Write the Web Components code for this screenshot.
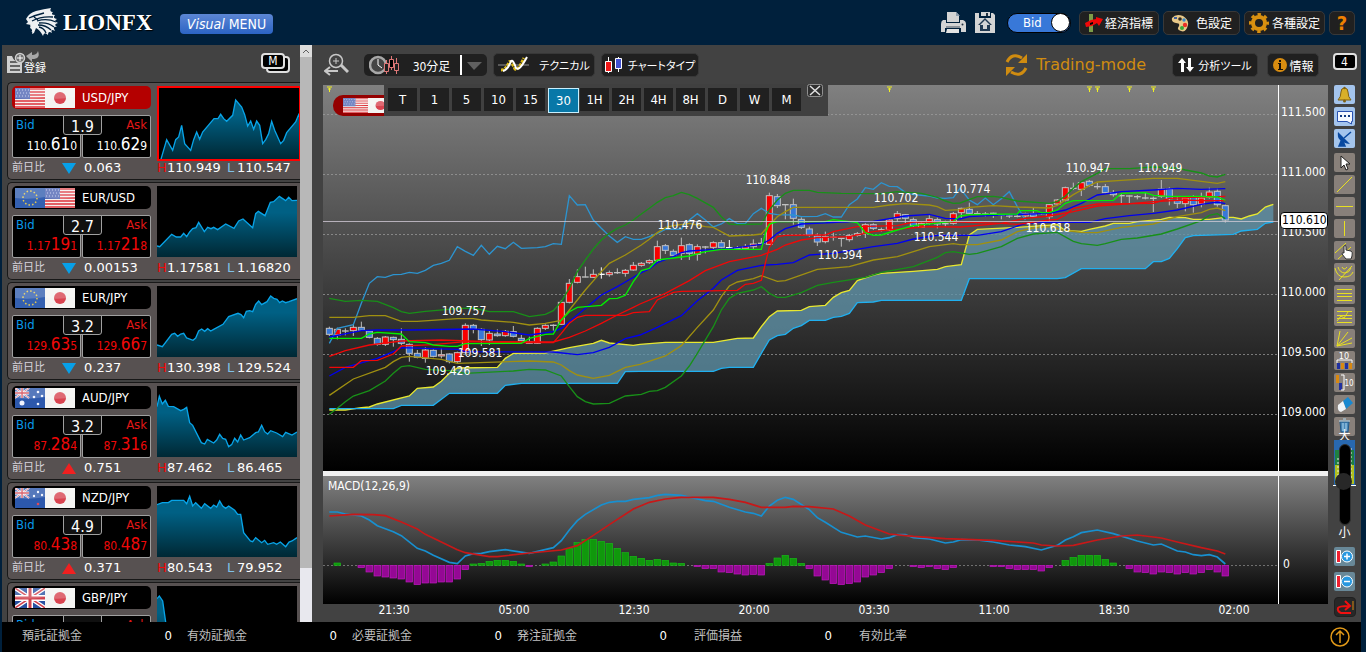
<!DOCTYPE html>
<html lang="ja">
<head>
<meta charset="utf-8">
<title>LION FX</title>
<style>
  body {
    margin: 0;
    background: #00203c;
    color: #fff;
    font-family: 'DejaVu Sans Condensed', 'Noto Sans CJK JP', sans-serif;
    font-size: 12px;
  }
</style>
</head>
<body>
<fx-app>
  <app-header slot="header"></app-header>
  <quote-board slot="board">
    <quote-card pair="USD/JPY" flags="us jp" bid="110. 61 0" ask="110. 62 9" spread="1.9" diff="0.063" trend="down" high="110.949" low="110.547" tick="flat" selected
      spark="5,217 23,155 41,187 50,155 59,147 68,112 77,167 95,187 104,155 113,132 122,154 131,132 165,92 177,92 185,79 194,92 203,100 221,82 230,36 248,57 257,80 266,114 275,99 284,124 293,99 302,112 311,167 320,155 329,137 338,100 347,127 365,167 374,157 383,134 410,102 419,80 426,97"></quote-card>
    <quote-card pair="EUR/USD" flags="eu us" bid="1.17 19 1" ask="1.17 21 8" spread="2.7" diff="0.00153" trend="down" high="1.17581" low="1.16820"
      spark="0,180 8,182 44,145 58,153 71,153 80,142 89,152 98,138 107,128 117,125 125,109 142,137 152,124 162,128 170,124 182,131 206,114 231,127 245,105 258,99 287,125 296,83 304,76 324,89 340,49 350,47 367,31 386,44 395,34 405,44 420,43"></quote-card>
    <quote-card pair="EUR/JPY" flags="eu jp" bid="129. 63 5" ask="129. 66 7" spread="3.2" diff="0.237" trend="down" high="130.398" low="129.524"
      spark="0,177 16,182 44,145 53,142 62,151 71,144 80,142 89,156 108,163 116,156 125,135 134,129 143,136 152,128 161,135 170,130 198,115 215,92 243,82 252,86 260,95 268,76 278,74 287,77 296,55 305,45 314,56 330,47 341,30 350,37 360,40 368,50 376,45 386,50 396,47 420,38"></quote-card>
    <quote-card pair="AUD/JPY" flags="au jp" bid="87. 28 4" ask="87. 31 6" spread="3.2" diff="0.751" trend="up" high="87.462" low="86.465"
      spark="0,62 7,31 16,54 25,43 34,61 50,62 71,74 80,70 89,64 98,110 107,118 133,170 143,174 151,160 170,171 179,162 188,145 197,157 206,160 215,182 224,176 233,157 242,168 251,147 260,162 278,155 296,140 304,138 314,118 323,137 332,144 341,134 359,141 377,152 386,139 405,147 420,138"></quote-card>
    <quote-card pair="NZD/JPY" flags="nz jp" bid="80. 43 8" ask="80. 48 7" spread="4.9" diff="0.371" trend="up" high="80.543" low="79.952"
      spark="0,56 16,50 34,50 44,43 80,43 89,53 98,31 107,60 116,50 133,67 143,53 161,67 170,57 179,63 188,45 197,60 206,67 215,60 233,73 242,85 251,85 260,140 280,165 287,167 296,155 314,170 323,163 332,175 350,170 359,175 370,168 386,182 396,168 405,165 420,155"></quote-card>
    <quote-card pair="GBP/JPY" flags="gb jp" bid="" ask="" spread="" diff="" trend="" high="" low=""
      spark="0,38 7,30 17,45 26,108 30,150 60,170 420,180"></quote-card>
  </quote-board>
  <chart-toolbar slot="toolbar"></chart-toolbar>
  <price-chart slot="chart"><period-tabs></period-tabs></price-chart>
  <macd-chart slot="chart"></macd-chart>
  <draw-tools slot="tools"></draw-tools>
  <account-bar slot="footer"></account-bar>
</fx-app>

<script>
// Styles that every shadow root shares
const base = `
  * { box-sizing: border-box; }
  button {
    margin: 0;
    padding: 0;
    border: none;
    background: none;
    color: inherit;
    font: inherit;
    white-space: nowrap;
    cursor: pointer;
  }
  svg { display: block; flex: none; }
`;

class FxElement extends HTMLElement {
  connectedCallback() {
    if (this.shadowRoot) return;
    this.attachShadow({ mode: 'open' });
    const template = document.createElement('template');
    template.innerHTML = `<style>${base}${this.styles()}</style>${this.render()}`;
    this.shadowRoot.appendChild(template.content.cloneNode(true));
  }
  styles() { return ''; }
  render() { return '<slot></slot>'; }
}

// Flags, 30x20
const unionJack = `
  <path d="M0 0L30 20M30 0L0 20" stroke="#fff" stroke-width="4"/>
  <path d="M0 0L30 20M30 0L0 20" stroke="#d0404c" stroke-width="1.5"/>
  <path d="M15 0V20M0 10H30" stroke="#fff" stroke-width="6"/>
  <path d="M15 0V20M0 10H30" stroke="#d0404c" stroke-width="3"/>`;
const star = (x, y, r) => `<circle cx="${x}" cy="${y}" r="${r}" fill="#f0f4ff"/>`;
const flagArt = {
  us: () => `<path d="M0 0H30V20H0Z" fill="#f6f1ee"/>
    <path d="M0 1H30M0 4H30M0 7H30M0 10H30M0 13H30M0 16H30M0 19H30" stroke="#dd3038" stroke-width="1.5"/>
    <path d="M0 0H15V11H0Z" fill="#5268b4"/>
    <path d="M1 2H15M2 5H15M1 8H15" stroke="#bcc8ee" stroke-dasharray="1 2"/>`,
  jp: () => `<path d="M0 0H30V20H0Z" fill="#f4f4f2"/><circle cx="15" cy="10" r="6" fill="#d84450"/>`,
  eu: () => `<path d="M0 0H30V20H0Z" fill="#3460b0"/>
    <circle cx="15" cy="10" r="7" fill="none" stroke="#e8cc50" stroke-width="1.5" stroke-dasharray="1.5 2.16"/>`,
  gb: () => `<path d="M0 0H30V20H0Z" fill="#2850a0"/>${unionJack}`,
  au: () => `<path d="M0 0H30V20H0Z" fill="#2c58ac"/><g transform="scale(.47 .5)">${unionJack}</g>
    ${star(7, 15, 2.5)}${star(23, 4, 1.3)}${star(19, 9, 1.3)}${star(27, 8, 1.3)}${star(23, 16, 1.3)}`,
  nz: () => `<path d="M0 0H30V20H0Z" fill="#2c58ac"/><g transform="scale(.47 .5)">${unionJack}</g>
    ${star(23, 4, 1.2)}${star(19, 8, 1.2)}${star(27, 7, 1.2)}
    <circle cx="23" cy="16" r="1.3" fill="#e04858"/>`,
};
const flag = (code, w = 30, h = 20) => `
  <svg width="${w}" height="${h}" viewBox="0 0 30 20" preserveAspectRatio="none" aria-hidden="true">
    ${flagArt[code]()}
    <path d="M0 0H30V9Q15 12 0 10Z" fill="#fff" opacity=".2"/>
  </svg>`;

class FxApp extends FxElement {
  styles() {
    return `
      :host {
        display: grid;
        grid-template: 45px minmax(0, 1fr) 30px / 311px minmax(0, 1fr);
        height: 100vh;
        padding: 0 5px 0 2px;
        box-sizing: border-box;
      }
      .top, .foot { grid-column: 1 / -1; }
      .side { display: flex; min-height: 0; background: #424242; }
      .main {
        display: grid;
        grid-template: 40px minmax(0, 1fr) / minmax(0, 1fr) 33px;
        background: #424242;
      }
      .tools { grid-row: 1 / 3; grid-column: 2; }
      .charts {
        display: flex;
        flex-direction: column;
        min-height: 0;
        margin-left: 10px;
      }
    `;
  }
  render() {
    return `
      <div class="top"><slot name="header"></slot></div>
      <div class="side"><slot name="board"></slot></div>
      <main class="main">
        <slot name="toolbar"></slot>
        <div class="charts"><slot name="chart"></slot></div>
        <div class="tools"><slot name="tools"></slot></div>
      </main>
      <div class="foot"><slot name="footer"></slot></div>
    `;
  }
}

class DarkButton extends FxElement {
  styles() {
    return `
      :host { display: block; }
      button {
        display: flex;
        align-items: center;
        justify-content: center;
        gap: var(--gap, 4px);
        width: 100%;
        height: 24px;
        padding: 0 5px;
        border: 1px solid #383838;
        border-radius: 5px;
        background: #202020;
      }
    `;
  }
  render() {
    return '<button type="button"><slot name="icon"></slot><slot></slot></button>';
  }
}

class AppHeader extends FxElement {
  styles() {
    return `
      :host { display: flex; align-items: center; height: 45px; padding: 0 6px 0 22px; }
      .logo { display: flex; align-items: center; gap: 4px; width: 156px; }
      .name { font: bold 23px/28px 'Liberation Serif', serif; text-shadow: 1px 1px 1px #000; }
      .visual {
        width: 93px;
        height: 20px;
        margin-top: 3px;
        border-radius: 4px;
        background: linear-gradient(#5c86d4, #2c64c4);
        font-size: 14px;
        line-height: 20px;
      }
      .icons { display: flex; gap: 9px; margin-left: auto; }
      .toggle {
        position: relative;
        display: flex;
        align-items: center;
        width: 64px;
        height: 20px;
        margin: 0 8px 0 12px;
        padding-left: 15px;
        border: 1px solid #000;
        border-radius: 10px;
        background: #3878d8;
        font-size: 13px;
      }
      .toggle input {
        position: absolute;
        right: 0;
        width: 19px;
        height: 19px;
        margin: 0;
        border: 1px solid #000;
        border-radius: 50%;
        background: #fff;
        appearance: none;
      }
      .buttons { display: grid; grid-template-columns: 80px 77px 81px 26px; gap: 4px; }
      .help { color: #f08000; font-size: 20px; font-weight: bold; }
    `;
  }
  render() {
    return `
      <div class="logo">
        <svg width="35" height="30" viewBox="0 0 35 30" fill="#eef0f2" aria-hidden="true">
          <path d="M2 11Q5 5 12 3Q20 1 27 0Q25 4 29 4Q26 7 31 7Q28 10 33 11Q29 13 34 15Q29 16 33 19Q28 18 31 23Q26 20 28 25Q24 22 24 27Q20 23 19 28Q16 22 12 20L10 25L8 26Q9 21 6 20L7 17L2 16L4 14Z"/>
          <path d="M5 10Q12 7 20 5M8 13Q17 8 29 9M13 13Q23 10 32 14M15 15Q24 14 30 19M14 17Q22 17 27 22M15 19Q20 20 22 25M10 9L14 12" fill="none" stroke="#00203c" stroke-width="1.3"/>
          <path d="M6 18L11 16L10 20L8 24" fill="none" stroke="#eef0f2"/>
        </svg>
        <span class="name">LIONFX</span>
      </div>
      <button class="visual" type="button"><i>Visual</i> MENU</button>
      <div class="icons">
        <svg width="25" height="22" viewBox="0 0 25 22" fill="#d4d4d4" aria-hidden="true">
          <path d="M6 0H15L18 3V10H6Z"/><path d="M15 0V4H19" fill="#8c9cac"/>
          <path d="M2 8H5V11H19V8H22Q25 9 25 12V20H20V16H4V20H0V12Q0 9 2 8Z"/>
          <path d="M6 17H18V21H5Z" fill="#e4e4e4"/><path d="M5 15H19" stroke="#405060"/><circle cx="21.5" cy="12.5" r="1" fill="#203040"/>
        </svg>
        <svg width="20" height="22" viewBox="0 0 20 22" aria-hidden="true">
          <path d="M0 1H4V6H16V1H18L20 3V21H0Z" fill="#d4d4d4"/><path d="M6 0H15V4H6Z" fill="#d4d4d4"/><path d="M11 1H13V4H11Z" fill="#203040"/>
          <path d="M10 6L17 13H15V19H5V13H3Z" fill="#203850"/><path d="M10 8L15 13H12V17H8V13H5Z" fill="#d4d4d4"/>
        </svg>
      </div>
      <label class="toggle">Bid<input type="checkbox" checked></label>
      <div class="buttons">
        <dark-button style="--gap: 2px">
          <svg slot="icon" width="18" height="18" viewBox="0 0 18 18"><path d="M4 0H8V18H4Z" fill="#7c9c48"/><path d="M0 9L6 6L11 5V3L18 5L14 12L12 9L7 12L1 13Z" fill="#f00808"/><path d="M5 9L8 8V10L5 11Z" fill="#000"/></svg>
          経済指標
        </dark-button>
        <dark-button style="--gap: 7px">
          <svg slot="icon" width="18" height="18" viewBox="0 0 18 18"><path d="M1 4Q5 -1 12 2Q18 6 17 11Q15 19 10 17Q5 16 8 12Q9 9 5 9Q0 8 1 4Z" fill="#e8c888"/><path d="M3 3H6V5H3Z" fill="#4060a0"/><circle cx="9" cy="5" r="1.8" fill="#302820"/><circle cx="13" cy="6" r="1.7" fill="#3888c8"/><circle cx="14" cy="11" r="2.2" fill="#e83028"/><circle cx="11" cy="14" r="2" fill="#38a838"/></svg>
          色設定
        </dark-button>
        <dark-button style="--gap: 3px">
          <svg slot="icon" width="20" height="20" viewBox="0 0 20 20"><circle cx="10" cy="10" r="6" fill="none" stroke="#d89010" stroke-width="4"/><circle cx="10" cy="10" r="8.5" fill="none" stroke="#d89010" stroke-width="3" stroke-dasharray="3.4 3.27" stroke-dashoffset="1.7"/></svg>
          各種設定
        </dark-button>
        <dark-button class="help">?</dark-button>
      </div>
    `;
  }
}

class QuoteBoard extends FxElement {
  styles() {
    return `
      :host { display: flex; flex: 1; min-height: 0; }
      .list { flex: 1; min-width: 0; overflow: hidden; padding-left: 5px; }
      .head { display: flex; align-items: flex-start; justify-content: space-between; height: 37px; padding: 6px 9px 0 0; }
      .add { display: flex; align-items: flex-end; height: 24px; font-size: 11px; line-height: 12px; }
      .add svg { align-self: flex-start; }
      .bar { display: flex; flex-direction: column; width: 12px; margin-right: 1px; background: #e8e8ee; }
      .bar .up { height: 12px; background: #dcdcdc; }
      .bar .thumb { height: 511px; background: #b8b8b8; }
    `;
  }
  render() {
    return `
      <div class="list">
        <div class="head">
          <button class="add" type="button">
            <svg width="17" height="24" viewBox="0 0 17 24" overflow="visible" aria-hidden="true">
              <path d="M0 5H5Q8 13 15 10V22H0Z" fill="#d0d0d0"/>
              <path d="M3 11H13M3 15H13M3 19H13" stroke="#404040" stroke-width="1.5"/>
              <circle cx="13" cy="7" r="4.5" fill="#707070" stroke="#d0d0d0" stroke-width="1.5"/>
              <path d="M13 4V10M10 7H16" stroke="#fff"/>
              <path d="M19 5L25 1V4Q30 4 31 0Q34 8 25 8V11Z" fill="#a8a8a8"/>
            </svg>
            登録
          </button>
          <button type="button" aria-label="M">
            <svg width="30" height="24" viewBox="0 0 30 24" fill="#000" stroke="#e0e0e0" stroke-width="2">
              <rect x="6" y="6" width="22" height="15" rx="3"/><rect x="1" y="3" width="22" height="14" rx="3"/>
              <text x="12" y="14" font-size="12" fill="#fff" stroke="none" text-anchor="middle">M</text>
            </svg>
          </button>
        </div>
        <slot></slot>
      </div>
      <div class="bar" aria-hidden="true">
        <svg class="up" width="12" height="12"><path d="M3 8L6 5L9 8" fill="none" stroke="#606060"/></svg>
        <div class="thumb"></div>
      </div>
    `;
  }
}

class QuoteCard extends FxElement {
  styles() {
    return `
      :host {
        display: grid;
        grid-template: 74px 16px / 139px 143px;
        column-gap: 6px;
        height: 98px;
        margin-bottom: 2px;
        padding: 3px 0 0 4px;
        box-sizing: border-box;
        border: 1px solid #181818;
        border-right: none;
        border-radius: 5px 0 0 5px;
        background: #575151;
      }
      .pair {
        display: flex;
        align-items: center;
        width: 139px;
        height: 23px;
        padding-left: 3px;
        border-radius: 5px;
        background: #000;
        font-size: 13px;
      }
      .pair span { margin-left: 7px; }
      :host([selected]) .pair { background: #b40000; }
      .prices {
        display: grid;
        grid-template-columns: 1fr 1fr;
        gap: 1px;
        position: relative;
        height: 42px;
        margin-top: 6px;
      }
      .price {
        display: flex;
        flex-direction: column;
        justify-content: space-between;
        padding: 0 3px 1px 3px;
        border: 1px solid #a0a0a0;
        border-radius: 2px;
        background: #000;
        color: #f01010;
        text-align: right;
        line-height: 18px;
      }
      .bid { text-align: left; color: #0898e8; font-size: 13px; }
      .ask { color: #e01818; font-size: 13px; }
      .fig { align-self: flex-end; color: #f00808; line-height: 20px; }
      .fig b { font-size: 17px; font-weight: normal; }
      :host([tick='flat']) .fig { color: #fff; }
      .spread {
        position: absolute;
        top: 0;
        left: 51px;
        width: 39px;
        height: 20px;
        border: 1px solid #a0a0a0;
        border-radius: 0 0 3px 3px;
        background: #101010;
        font-size: 16px;
        line-height: 22px;
        text-align: center;
      }
      .spark { display: block; width: 140px; height: 71px; background: #000; }
      :host([selected]) .spark { width: 143px; height: 75px; border: 2px solid #f00; border-right-width: 1px; }
      .row {
        display: flex;
        align-items: center;
        font-family: 'DejaVu Sans', 'Noto Sans CJK JP', sans-serif;
        font-size: 13px;
        line-height: 16px;
      }
      .row small { width: 50px; font-size: 11px; color: #d8d4dc; }
      .row svg { margin-right: 8px; }
      .h, .l { display: inline-flex; width: 70px; }
      .h::before { content: 'H'; width: 10px; color: #f00808; }
      .l::before { content: 'L'; width: 10px; color: #80c0e8; }
    `;
  }
  render() {
    const get = name => this.getAttribute(name);
    const figure = value => {
      const [head = '', big = '', last = ''] = value.split(' ');
      return `${head}<b>${big}</b>${last}`;
    };
    const [left, right] = get('flags').split(' ');
    const line = get('spark');
    const first = line.split(',')[0];
    const last = line.split(' ').pop().split(',')[0];
    const up = get('trend') === 'up';
    // a pair without quotes yet has no day figures
    const figures = get('diff') ? `
      <div class="row">
        <small>前日比</small>
        <svg width="14" height="11"><path d="${up ? 'M0 11H14L7 0Z' : 'M0 0H14L7 11Z'}" fill="${up ? '#f02020' : '#08a0e8'}"/></svg>
        ${get('diff')}
      </div>
      <div class="row"><span class="h">${get('high')}</span><span class="l">${get('low')}</span></div>` : '';
    return `
      <div>
        <button class="pair" type="button">${flag(left)}${flag(right)}<span>${get('pair')}</span></button>
        <div class="prices">
          <button class="price" type="button"><span class="bid">Bid</span><span class="fig">${figure(get('bid'))}</span></button>
          <button class="price" type="button"><span class="ask">Ask</span><span class="fig">${figure(get('ask'))}</span></button>
          <span class="spread">${get('spread')}</span>
        </div>
      </div>
      <svg class="spark" viewBox="0 0 420 213" preserveAspectRatio="none" aria-hidden="true">
        <defs><linearGradient id="fill" x1="0" y1="80" x2="0" y2="213" gradientUnits="userSpaceOnUse">
          <stop offset="0" stop-color="#006084"/><stop offset="1" stop-color="#002834"/></linearGradient></defs>
        <path d="M${first} 213L${line}L${last} 213Z" fill="url(#fill)"/>
        <polyline points="${line}" fill="none" stroke="#08a4e8" stroke-width="4"/>
      </svg>
      ${figures}
    `;
  }
}

class ChartToolbar extends FxElement {
  styles() {
    return `
      :host { display: flex; align-items: center; padding-left: 11px; font-feature-settings: 'palt'; }
      .zoom { margin-right: 15px; }
      .foot { display: flex; align-items: center; width: 123px; height: 22px; border-radius: 5px; background: #202020; }
      .foot span { width: 39px; margin: 0 9px 0 12px; }
      .foot svg:first-child { margin-left: 5px; }
      .tech { width: 102px; margin: 0 6px; }
      .type { width: 98px; }
      dark-button { font-size: 11px; }
      .mode { display: flex; align-items: center; gap: 8px; margin-left: auto; color: #d08c10; font: 16px/24px 'DejaVu Sans', sans-serif; }
      .tool { width: 86px; margin-left: 26px; }
      .info { width: 52px; margin: 0 9px; }
    `;
  }
  render() {
    return `
      <button class="zoom" type="button" aria-label="縮小">
        <svg width="25" height="24" viewBox="0 0 25 24" fill="none" stroke="#c8c8c8" stroke-width="2">
          <circle cx="12" cy="8" r="6.5" stroke-width="1.5"/><path d="M12 5V11M9 8H15" stroke-width="1"/>
          <path d="M17 12L24 19" stroke-width="3"/><path d="M14 18H2M6 14L1 18L6 22"/>
        </svg>
      </button>
      <button class="foot" type="button">
        <svg width="31" height="20" viewBox="0 0 31 20">
          <circle cx="9" cy="10" r="8" fill="#444" stroke="#a8a8a8" stroke-width="2.5"/>
          <path d="M9 4V10L13 13" fill="none" stroke="#fff"/>
          <g fill="#202020" stroke="#e07878"><path d="M17.500 5V19M22.500 1V15M27.500 3V19"/><path d="M15.500 8.500H19.500V16.500H15.500Z"/><path d="M20.500 4.500H24.500V12.500H20.500Z" fill="#000"/><path d="M25.500 8.500H29.500V15.500H25.500Z"/></g>
        </svg>
        <span>30分足</span>
        <svg width="27" height="20"><path d="M0 0H2V20H0Z" fill="#fff"/><path d="M7 7H22L14 15Z" fill="#606060"/></svg>
      </button>
      <dark-button class="tech" style="--gap: 10px">
        <svg slot="icon" width="31" height="18" viewBox="0 0 31 18" fill="none">
          <path d="M0 9H31" stroke="#909090"/><path d="M3 14Q8 14 11 6Q13 4 17 13Q20 15 26 2" stroke="#d8b818" stroke-width="3" stroke-dasharray="3 1"/>
          <path d="M5 15Q10 14 13 5Q15 3 18 12Q21 16 29 1" stroke="#fff" stroke-width="2"/>
        </svg>
        テクニカル
      </dark-button>
      <dark-button class="type" style="--gap: 6px">
        <svg slot="icon" width="17" height="16" viewBox="0 0 17 16" stroke="#fff">
          <path d="M3.500 0V16M13.500 0V15"/><path d="M.500 4.500H6.500V14.500H.500Z" fill="#f01818"/><path d="M10.500 1.500H16.500V11.500H10.500Z" fill="#4050d0"/>
        </svg>
        チャートタイプ
      </dark-button>
      <div class="mode">
        <svg width="23" height="24" viewBox="0 0 23 24" fill="none" stroke="#d08c10" stroke-width="3">
          <path d="M2 9Q7 -1 17 5M21 15Q16 25 6 19"/><path d="M22 1V10H13ZM1 23V14H10Z" fill="#d08c10" stroke="none"/>
        </svg>
        Trading-mode
      </div>
      <dark-button class="tool">
        <svg slot="icon" width="16" height="14" viewBox="0 0 16 14" fill="#fff"><path d="M4 0L8 5H6V14H3V5H0Z"/><path d="M12 14L8 9H10V0H13V9H16Z"/></svg>
        分析ツール
      </dark-button>
      <dark-button class="info" style="--gap: 3px; font-size: 12px">
        <svg slot="icon" width="14" height="14" viewBox="0 0 14 14"><circle cx="7" cy="7" r="7" fill="#d88c10"/><path d="M5 5H8V11H10V12H5V11H6V6H5ZM6 2H8V4H6Z" fill="#181008"/></svg>
        情報
      </dark-button>
    `;
  }
}

class PeriodTabs extends FxElement {
  styles() {
    return `
      :host {
        position: absolute;
        top: -1px;
        left: 61px;
        display: flex;
        gap: 3px;
        width: 444px;
        height: 32px;
        padding: 4px 4px 0;
        box-sizing: border-box;
        background: #404040;
        font-size: 13px;
      }
      button { width: 29px; height: 23px; background: #202020; }
      button[aria-pressed='true'] { width: 31px; height: 25px; margin-right: -2px; border: 1px solid #c8f0ff; background: #0878a8; }
      .close { width: 16px; height: 14px; margin: -4px 0 0 3px; background: none; }
    `;
  }
  render() {
    const periods = ['T', '1', '5', '10', '15', '30', '1H', '2H', '4H', '8H', 'D', 'W', 'M'];
    return `
      ${periods.map(p => `<button type="button" aria-pressed="${p === '30'}">${p}</button>`).join('')}
      <button class="close" type="button" aria-label="閉じる">
        <svg width="16" height="14"><rect x=".5" y=".5" width="15" height="12" rx="2" fill="#303030" stroke="#909090"/><path d="M3 2L13 11M13 2L3 11" stroke="#e0e0e0" stroke-width="1.500"/></svg>
      </button>
    `;
  }
}

// Chart data is kept in thirds of a pixel, in sections that follow one another
const join = (series, width) => series.split('|').map((part, n) =>
  part.trim().split(/\s+/).map(p => {
    const [x, y] = p.split(',').map(Number);
    return `${x + n * width},${y}`;
  }).join(' ')).join(' ');
const STEP = 24;
const START = 28;

const lines = [
  // lagging span
  ['#2c94d0', `28,790 52,745 100,734 124,670 148,610 172,590 196,592 220,584 244,583 268,577 292,580 316,571 340,556 364,550 388,541 412,500 436,514 460,526 484,496 508,523 532,499 556,506 580,487 604,505 652,503 676,500 700,491 724,493 748,347 772,375 796,374 820,420 844,445 868,468 892,487 916,470 940,478 964,478 |
    28,470 52,460 76,448 124,447 148,420 172,401 196,420 220,441 244,432 268,416 292,431 316,431 340,401 364,385 388,400 412,404 460,405 484,410 532,409 556,401 580,411 604,411 628,374 652,357 676,323 700,328 724,308 748,319 772,320 796,337 820,344 868,348 892,354 916,355 940,353 960,325 |
    28,360 52,374 76,354 100,374 124,356 148,335 172,380 196,420`],
  // bands
  ['#189018', `28,655 76,664 124,661 172,664 220,683 244,695 268,700 316,694 412,686 460,684 508,695 580,695 628,710 676,703 700,692 724,665 748,625 772,575 796,540 820,507 844,480 868,460 892,445 916,435 940,420 964,402 |
    28,385 52,367 76,353 100,347 124,337 148,344 172,355 220,382 244,410 268,432 292,434 364,432 388,390 412,360 436,340 460,331 508,331 532,337 604,340 724,341 772,335 844,340 892,352 916,363 940,370 |
    0,369 52,350 100,349 124,352 172,363 268,370 292,365 316,348 340,325 364,305 412,280 436,266 508,266 580,261 652,264 676,270 724,279 748,288 772,291 796,283`],
  ['#189018', `28,1003 52,985 76,965 100,948 148,932 196,903 220,880 244,860 268,857 316,868 388,872 436,880 580,873 628,868 676,870 724,888 748,920 772,950 796,965 820,972 868,970 916,948 964,943 |
    28,934 52,932 76,922 124,888 148,858 172,820 220,740 244,690 268,655 292,640 340,630 364,620 388,640 412,652 436,652 484,638 532,616 580,607 676,592 724,577 820,560 892,532 916,518 940,515 |
    28,523 52,520 124,500 172,475 220,462 292,457 340,484 364,491 412,496 436,491 484,478 532,474 604,462 652,447 724,422 748,406 772,401 796,416`],
  ['#a09010', `28,712 100,712 148,707 196,707 244,724 292,724 412,716 460,716 484,720 580,727 628,735 676,730 724,721 748,690 796,630 844,575 868,550 916,525 964,495 |
    28,478 52,458 76,443 100,437 148,430 196,440 220,442 268,468 340,465 364,462 388,435 412,410 436,395 460,382 700,382 748,375 796,371 868,375 892,380 916,391 |
    0,389 28,382 100,377 172,381 268,384 292,376 340,344 388,317 412,306 484,301 580,295 652,295 700,301 772,310 796,305`],
  ['#a09010', `28,946 100,897 196,862 220,845 244,832 268,829 364,838 412,850 628,843 700,846 724,855 748,872 772,885 820,895 868,886 916,862 |
    0,853 76,828 124,797 172,742 220,690 244,650 268,618 292,606 340,596 364,587 412,604 436,602 532,568 628,560 700,540 772,530 868,500 940,491 |
    0,494 52,494 124,480 172,455 220,444 268,440 316,452 364,457 412,458 484,442 580,432 652,410 724,398 748,388 772,384 796,392`],
  ['#0000f0', `28,771 124,752 172,750 268,750 460,747 556,755 628,765 700,755 724,745 772,705 844,645 892,620 916,606 964,578 |
    28,567 52,548 100,530 124,518 148,513 268,506 364,493 388,480 412,460 436,446 484,432 604,426 700,424 796,408 868,403 916,415 |
    0,417 28,410 100,406 268,400 316,390 364,370 412,345 484,335 580,330 652,325 724,328 796,326`],
  ['#0000f0', `28,888 76,862 172,835 220,815 244,803 412,808 436,815 700,816 772,824 820,818 868,802 916,776 |
    0,765 52,742 124,707 172,662 220,625 244,600 292,571 364,556 412,553 460,548 508,525 580,520 700,500 772,490 820,477 892,466 |
    0,466 52,466 124,455 196,430 244,427 388,427 436,416 508,407 580,400 652,390 724,373 772,366 796,371`],
  ['#f00808', `28,829 76,812 148,795 244,783 364,780 508,785 700,786 748,772 796,753 844,730 892,705 940,682 |
    0,672 76,640 148,602 196,572 268,545 364,526 412,508 436,495 484,480 532,473 628,470 700,455 772,447 868,440 |
    0,441 124,430 196,415 268,408 340,395 412,378 484,373 580,365 676,360 724,362 796,362`],
  // base line and conversion line
  ['#f00808', `28,862 100,862 124,842 172,841 220,822 244,798 340,794 436,785 604,788 700,788 724,760 748,730 772,712 796,706 916,706 940,698 |
    28,695 52,660 100,637 124,634 292,631 316,613 340,610 364,601 376,550 388,502 412,470 436,466 556,465 580,455 652,440 772,437 820,426 |
    0,426 124,430 172,433 268,420 292,418 316,405 340,385 412,372 580,370 628,355 700,352 796,349`],
  ['#00f000', `28,775 124,775 148,762 172,757 244,762 268,785 316,788 340,795 388,799 412,799 436,791 604,790 628,775 676,763 700,762 724,720 748,695 772,682 844,676 868,656 892,655 916,646 940,605 964,572 |
    28,565 52,540 148,528 196,515 244,508 364,508 376,460 388,432 412,425 556,425 580,419 652,428 676,458 700,466 724,465 772,450 820,437 940,424 |
    0,408 28,404 172,402 180,392 230,392 244,398 268,398 292,390 316,370 340,362 460,361 484,340 556,338 580,346 628,349 724,349 772,351 796,361`],
];
const cloudTop = `28,990 76,990 124,983 148,981 172,972 268,948 292,925 340,921 364,904 388,880 412,864 532,862 556,835 580,820 676,819 748,803 820,790 844,781 868,789 940,796 |
  0,793 76,787 220,787 292,775 340,774 364,740 388,710 412,693 484,691 508,680 556,676 580,652 604,638 628,631 652,602 700,585 724,580 820,574 892,568 916,560 964,554 |
  28,465 52,448 172,442 292,434 316,452 364,454 388,448 436,438 460,430 508,430 532,425 604,418 628,412 676,413 700,418 748,418 796,412 820,412 844,417 868,408 892,402 916,381 940,373`;
const cloudBottom = `28,986 220,986 244,976 340,976 388,940 532,940 556,916 604,910 892,910 916,875 |
  0,874 220,874 244,865 268,862 340,862 364,820 388,780 412,767 436,763 460,745 484,737 508,721 556,721 580,712 604,709 628,700 652,668 700,666 724,661 964,661 |
  28,596 292,596 316,593 364,566 556,566 580,545 604,545 628,535 652,506 676,473 700,467 820,463 844,453 892,448 916,430 940,426`;

// body top, body bottom, high, low; r = rise, b = fall, d = no body
const candles = `b745,763,740,768 r748,765,743,778 d753,753,745,766 r742,752,734,768 b742,751,725,753 b753,772,753,775 b775,793,771,797 r771,793,768,798
  b772,779,770,800 b778,790,745,795 b793,820,790,845 b820,832,810,835 r810,835,802,848 b811,829,808,832 r824,828,805,835 b822,845,820,850
  r818,845,815,850 r736,818,730,820 b736,747,732,760 b748,779,745,798 r760,780,750,795 b762,767,748,770 r754,767,750,770 b755,769,738,772
  b775,782,765,785 r785,790,770,790 r745,790,742,792 r736,745,733,750 d736,736,733,752 r667,733,660,735 r610,667,597,670 r590,607,568,610
  d591,591,560,592 r583,592,568,594 w583,583,562,596 r578,584,572,590 d578,578,565,582 r571,580,567,590 r556,570,546,572 r550,556,546,560
  r542,548,538,552 r500,541,482,545 b497,511,492,522 b514,526,508,530 r497,520,473,540 b494,520,490,540 r500,523,493,542 d501,501,498,520
  r488,502,484,510 b488,502,480,505 w503,503,480,510 d505,505,498,510 r500,506,492,510 r492,500,478,508 d490,490,474,492 r347,493,338,495
  b350,377,342,384 d374,374,372,418 b374,415,356,434 b418,442,412,447 b447,465,440,470 b468,486,460,498 r470,485,455,490 d472,472,458,482
  d475,475,475,500 r467,479,462,485 r461,466,456,470 r434,460,430,474 b434,445,430,450 d449,449,443,455 r420,450,417,453 r401,416,393,425
  b404,415,402,430 b419,437,413,440 r430,442,425,444 r416,430,405,434 b419,432,413,445 d431,431,422,440 r401,430,396,434 r385,398,383,414
  b388,400,368,402 d401,401,393,405 d402,402,396,410 d400,400,398,414 d405,405,402,418 d408,408,402,414 d409,409,405,412 r401,408,398,412
  b401,409,384,412 d401,401,396,404 r374,410,370,424 r360,372,357,376 r323,360,320,364 d325,325,308,330 r308,328,306,348 b304,316,300,320
  d320,320,308,328 b320,338,312,342 b338,344,330,350 d347,347,343,370 d348,348,346,370 d350,350,345,358 d354,354,338,358 d355,355,350,396
  r327,349,300,354 b327,356,322,376 b362,370,350,384 r354,371,350,394 b350,374,346,398 r354,372,338,382 r336,352,323,356 b334,374,325,380
  b377,420,374,428`.split(/\s+/);

class PriceChart extends FxElement {
  styles() {
    return `
      :host {
        position: relative;
        display: flex;
        flex: 1 1 386px;
        min-height: 0;
        background: linear-gradient(#808080, #000);
      }
      .plot { flex: 1; width: 0; height: 100%; border-right: 1px solid #fff; }
      .axis { position: relative; display: flex; flex-direction: column; gap: 44px; width: 49px; padding: 19px 0 0 2px; line-height: 16px; }
      .now {
        position: absolute;
        top: 127px;
        left: 1px;
        width: 48px;
        padding-left: 1px;
        border: 1px solid #000;
        border-radius: 4px;
        background: #fff;
        color: #000;
        line-height: 15px;
      }
      .badge {
        position: absolute;
        top: 10px;
        left: 10px;
        display: flex;
        height: 21px;
        padding: 3px 10px;
        border-radius: 10px;
        background: #940000;
      }
    `;
  }
  candle(code, n) {
    const [top, bottom, high, low] = code.slice(1).split(',').map(Number);
    const x = START + n * STEP;
    const color = code[0] === 'w' ? '#fff' : '#c0c0c0';
    const wick = `<path d="M${x} ${high}V${low}" stroke="${color}" stroke-width="3"/>`;
    if (top === bottom) return `${wick}<path d="M${x - 10} ${top}H${x + 10}" stroke="${color}" stroke-width="4"/>`;
    return `${wick}<rect x="${x - 9}" y="${top}" width="18" height="${bottom - top}" fill="${code[0] === 'r' ? '#f80000' : '#3878d8'}" stroke="${color}" stroke-width="3"/>`;
  }
  render() {
    const marks = [6, 566, 766, 774, 806, 830];
    const tags = [[141, 230, '109.757'], [157, 272, '109.581'], [125, 290, '109.426'], [357, 144, '110.476'],
      [445, 99, '110.848'], [517, 174, '110.394'], [573, 117, '110.702'], [613, 156, '110.544'],
      [645, 108, '110.774'], [765, 87, '110.947'], [725, 147, '110.618'], [837, 87, '110.949']];
    const top = join(cloudTop, 960);
    const bottom = join(cloudBottom, 960);
    return `
      <svg class="plot" role="img" aria-label="USD/JPY 30分足">
        ${[29, 89, 149, 209, 269, 329].map(y => `<line x1="0" x2="100%" y1="${y}.5" y2="${y}.5" stroke="#a0a0a0" stroke-opacity=".7" stroke-dasharray="2 2"/>`).join('')}
        <g transform="translate(-3 -5) scale(.33333)" fill="none" stroke-width="3">
          <polygon points="${top} ${bottom.split(' ').reverse().join(' ')}" fill="#6096ac" fill-opacity=".75"/>
          <polyline points="${top}" stroke="#e8e830" stroke-width="4"/>
          <polyline points="${bottom}" stroke="#20b0f0" stroke-width="4"/>
          ${candles.map((c, n) => this.candle(c, n)).join('')}
          ${lines.map(([color, data]) => `<polyline points="${join(data, 960)}" stroke="${color}" stroke-width="4"/>`).join('')}
        </g>
        <line x1="0" x2="100%" y1="136.5" y2="136.5" stroke="#d0c8d4" stroke-opacity=".8"/>
        ${marks.map(x => `<path d="M${x - 2} 2H${x + 3}M${x - 1} 4H${x + 2}M${x + .5} 3V7" stroke="#f0f020"/>`).join('')}
        <g fill="#fff" font-size="12" text-anchor="middle">${tags.map(([x, y, t]) => `<text x="${x}" y="${y}">${t}</text>`).join('')}</g>
      </svg>
      <div class="badge">${flag('us', 25, 15)}${flag('jp', 25, 15)}</div>
      <div class="axis">
        ${['111.500', '111.000', '110.500', '110.000', '109.500', '109.000'].map(v => `<span>${v}</span>`).join('')}
        <span class="now">110.610</span>
      </div>
      <slot></slot>
    `;
  }
}

const histogram = [0, 7, 0, 0, -7, -20, -32, -35, -38, -41, -50, -58, -53, -53, -50, -50, -41, -13, 4, 6, 12, 15, 15, 12, 4, -4, 0, 4, 10, 28,
  50, 68, 77, 78, 72, 66, 51, 38, 27, 21, 15, 18, 15, 7, 6, 0, -4, -10, -10, -20, -22, -26, -29, -27, -29, 6, 22, 30, 21, 6,
  -10, -32, -44, -55, -58, -55, -50, -35, -29, -22, -10, 0, 0, -4, -7, -4, -10, -13, -7, 0, 0, 0, 0, -4, -4, -10, -13, -13, -13, -17,
  -7, 0, 15, 24, 30, 30, 30, 18, 7, 0, -10, -20, -22, -26, -20, -22, -26, -22, -26, -22, -13, -20, -32];
const macdLine = `28,141 52,141 76,147 124,153 148,165 172,182 220,200 244,212 292,250 316,258 340,271 388,292 412,296 436,273 460,266 484,265 508,260 556,254 628,265 700,248 724,227 748,195 772,167 796,148 844,120 868,112 892,109 916,109 940,103 988,98 1012,91 1036,88 1084,91 1156,107 1180,109 1228,127 1276,141 1300,145 1324,153 1348,123 1372,106 1396,97 |
  10,103 58,134 82,158 106,172 154,202 202,216 226,213 274,222 298,218 322,209 346,209 370,218 418,222 466,234 490,231 514,224 562,225 610,231 658,240 706,245 754,255 802,241 826,225 850,215 874,203 922,195 970,206 1042,228 1090,240 1114,237 1162,258 1186,261 1210,269 1234,272 1258,269 1282,276 1306,297`;
const signalLine = `28,153 100,148 160,149 196,152 244,171 292,192 316,208 364,231 412,254 436,263 508,275 532,275 628,264 724,255 772,242 820,211 868,179 940,132 988,112 1036,102 1084,97 1180,97 1228,103 1276,112 1324,127 1396,127 |
  10,124 58,125 130,132 178,153 226,180 298,207 370,214 466,221 610,226 730,234 754,240 802,243 850,241 922,225 994,213 1042,210 1114,219 1162,231 1234,248 1282,258 1306,267`;

class MacdChart extends FxElement {
  styles() {
    return `
      :host { display: block; flex: none; }
      .panel { display: flex; position: relative; height: 133px; border-top: 5px solid #f0f0f0; background: linear-gradient(#808080, #000); }
      .plot { flex: 1; width: 0; height: 100%; border-right: 1px solid #fff; }
      .axis { width: 49px; padding: 80px 0 0 4px; line-height: 16px; }
      .times { display: flex; height: 18px; padding-left: 11px; line-height: 12px; }
      .times span { flex: 0 0 120px; text-align: center; }
    `;
  }
  bar(value, n) {
    if (!value) return '';
    const y = value > 0 ? 301 - value : 301;
    const colors = value > 0 ? ['#10980c', '#18b818'] : ['#940894', '#c018c0'];
    return `<rect x="${START + n * STEP - 10}" y="${y}" width="20" height="${Math.abs(value)}" fill="${colors[0]}" stroke="${colors[1]}" stroke-width="2"/>`;
  }
  render() {
    const times = ['21:30', '05:00', '12:30', '20:00', '03:30', '11:00', '18:30', '02:00'];
    return `
      <div class="panel">
        <svg class="plot" role="img" aria-label="MACD">
          <line x1="0" x2="100%" y1="89.5" y2="89.5" stroke="#707070" stroke-dasharray="2 2"/>
          <g transform="translate(-3 -11) scale(.33333)" fill="none" stroke-width="5">
            ${histogram.map((v, n) => this.bar(v, n)).join('')}
            <polyline points="${join(macdLine, 1410)}" stroke="#1890d0"/>
            <polyline points="${join(signalLine, 1410)}" stroke="#c81818"/>
          </g>
          <text x="5" y="14" font-size="12" fill="#fff">MACD(12,26,9)</text>
        </svg>
        <div class="axis">0</div>
      </div>
      <div class="times">${times.map(t => `<span>${t}</span>`).join('')}</div>
    `;
  }
}

// Tile icons, 21x19
const Y = 'fill="none" stroke="#e8e020"';
const tiles = [
  ['アラート', 'blue', '<path d="M4 15Q7 12 7 7Q7 3 10.500 3Q14 3 14 7Q14 12 17 15Z" fill="#d8b028" stroke="#806010"/><circle cx="10.500" cy="16" r="1.500" fill="#806010"/><circle cx="10.500" cy="3" r="1.200" fill="#806010"/>'],
  ['メッセージ', 'blue', '<path d="M3.500 4.500H18.500V14.500H17.500V17L13 14.500H3.500Z" fill="#f4f8ff" stroke="#2850b0"/><path d="M6 9H8M10 9H12M14 9H16" stroke="#103880" stroke-width="2"/>'],
  ['アンテナ', 'blue last', '<path d="M4 3Q2 13 16 15Z" fill="#0848a0"/><path d="M10 9L17 3M8 10L5 17H11Z" fill="#0848a0" stroke="#0848a0" stroke-width="1.500"/>'],
  ['選択', '', '<path d="M7 3V15L10 12L12 17L14 16L12 11H16Z" fill="#fff" stroke="#202020"/>'],
  ['トレンドライン', '', `<path d="M3 17L18 2" ${Y}/>`],
  ['水平線', '', `<path d="M2 9.500H19" ${Y}/>`],
  ['垂直線', '', `<path d="M10.500 2V17" ${Y}/>`],
  ['平行線', '', `<path d="M1 12L12 2M4 18L17 6" ${Y}/><path d="M10 5Q12 3 12 6V9L17 10Q19 11 18 15L17 18H12L8 13Q8 11 10 12Z" fill="#fff" stroke="#303030"/>`],
  ['アーク', '', `<path d="M5 17L18 3M1 5Q3 14 10 14Q17 14 19 9M4 4Q6 10 11 10Q15 10 17 5M8 4Q10 8 13 4" ${Y}/>`],
  ['リトレースメント', '', `<path d="M3 4.500H18M3 8.500H18M3 11.500H18M3 15.500H18" ${Y}/>`],
  ['エクスパンション', '', `<path d="M3 4.500H18M3 8.500H18M3 11.500H18M3 15.500H18M3 14L7 9L10 11L14 5" ${Y}/>`],
  ['ファン', '', `<path d="M3 17L6 2M3 17L14 3M3 17L18 9M3 17L18 14" ${Y}/>`],
  ['本数', '', '<text x="10" y="8" font-size="9" fill="#fff" text-anchor="middle">10</text><path d="M3 12V9H18V12" fill="none" stroke="#fff"/><path d="M3 12H6V18H3ZM11 12H14V18H11Z" fill="#2030a0"/><path d="M7 12H10V18H7ZM15 12H18V18H15Z" fill="#d88810"/>'],
  ['値幅', '', '<path d="M2 2H5V10H2Z" fill="#d88810"/><path d="M5 10H8V17H5Z" fill="#2030a0"/><path d="M7 2H10V17H7" fill="none" stroke="#fff"/><text x="15" y="13" font-size="8" fill="#fff" text-anchor="middle">10</text>'],
  ['消しゴム', '', '<path d="M9 6L14 2L19 8L12 14Z" fill="#1888d0"/><path d="M9 6L12 14L7 17Q3 16 4 10Z" fill="#f0f4f8"/>'],
  ['ごみ箱', 'open', '<path d="M6 5H15L14 15H7Z" fill="#4888b8" stroke="#205888"/><path d="M5 4H16M9 2H12M9 6V14M12 6V14" stroke="#b0d8f0"/>'],
];

class DrawTools extends FxElement {
  styles() {
    return `
      :host { display: flex; flex-direction: column; align-items: center; padding-top: 8px; }
      .count { width: 24px; height: 17px; margin-bottom: 15px; border: 2px solid #e0e0e0; border-radius: 4px; background: #000; line-height: 12px; }
      .tile { height: 19px; margin-bottom: 3px; border-radius: 2px; background: #88807a; }
      .blue { background: #a4c4ec; }
      .last { margin-bottom: 5px; }
      .open { margin-bottom: -6px; }
      .size { display: flex; flex-direction: column; align-items: center; line-height: 13px; }
      .range { position: relative; width: 23px; height: 84px; }
      .range svg { position: absolute; top: -3px; left: 0; }
      .range input {
        position: relative;
        display: block;
        width: 12px;
        height: 81px;
        margin: 1px auto 0;
        border: 1px solid #303030;
        border-radius: 6px;
        background: #000;
        writing-mode: vertical-lr;
        appearance: none;
      }
      .range input::-webkit-slider-thumb { width: 17px; height: 17px; margin-left: -3px; border-radius: 50%; background: #282828; appearance: none; }
      .grow { margin: 7px 0 6px; background: #688898; }
      .shrink { margin-bottom: 6px; background: #688898; }
      .redo { border: 1px solid #202020; border-radius: 4px; background: #282828; }
    `;
  }
  render() {
    const magnify = sign => `
      <svg width="21" height="19"><path d="M2.500 3.500H6.500V15.500H2.500Z" fill="#f02030" stroke="#fff"/>
        <circle cx="13" cy="9.500" r="5.500" fill="#2898e0" stroke="#fff"/><path d="${sign}" stroke="#fff" stroke-width="1.500"/></svg>`;
    return `
      <button class="count" type="button">4</button>
      ${tiles.map(([label, cls, art]) => `<button class="tile ${cls}" type="button" aria-label="${label}"><svg width="21" height="19">${art}</svg></button>`).join('')}
      <div class="size">
        <span>大</span>
        <div class="range">
          <svg width="23" height="48"><path d="M1 0H22V45H1Z" fill="#2868b0"/><path d="M2 10H21V25H2Z" fill="#208040"/><path d="M2 25H21V44H2Z" fill="#b0c020"/><path d="M5 18V42M18 8V40" stroke="#e8f0e0" stroke-dasharray="2 2"/><path d="M0 45.500H23" stroke="#fff"/></svg>
          <input type="range" aria-label="サイズ" value="45">
        </div>
        <span>小</span>
      </div>
      <button class="tile grow" type="button" aria-label="拡大">${magnify('M10 9.500H16M13 6.500V12.500')}</button>
      <button class="tile shrink" type="button" aria-label="縮小">${magnify('M10 9.500H16')}</button>
      <button class="redo" type="button" aria-label="最新">
        <svg width="20" height="18" fill="none" stroke="#f01010" stroke-width="2"><path d="M16 15H6Q2 13 3 10Q4 8 14 8M10 3L15 8L10 12"/><path d="M18 3V12" stroke="#d88810" stroke-width="1"/></svg>
      </button>
    `;
  }
}

class AccountBar extends FxElement {
  styles() {
    return `
      :host { display: flex; align-items: center; justify-content: space-between; height: 30px; padding: 0 11px 0 20px; background: #000; }
      dl { display: flex; gap: 15px; margin: 0 0 2px; }
      div { display: grid; grid-template-columns: 60px 90px; align-items: center; line-height: 18px; }
      dt { color: #c0c0c0; text-align: right; white-space: nowrap; }
      dd { margin: 0; text-align: right; font-size: 13px; }
    `;
  }
  render() {
    const items = ['預託証拠金', '有効証拠金', '必要証拠金', '発注証拠金', '評価損益', '有効比率'];
    return `
      <dl>${items.map((name, n) => `<div><dt>${name}</dt><dd>${n < 5 ? '0' : ''}</dd></div>`).join('')}</dl>
      <button type="button" aria-label="上へ">
        <svg width="20" height="20" fill="none" stroke="#e09818" stroke-width="1.500"><circle cx="10" cy="10" r="9"/><path d="M10 16V4M6 8L10 4L14 8"/></svg>
      </button>
    `;
  }
}

customElements.define('fx-app', FxApp);
customElements.define('dark-button', DarkButton);
customElements.define('app-header', AppHeader);
customElements.define('quote-board', QuoteBoard);
customElements.define('quote-card', QuoteCard);
customElements.define('chart-toolbar', ChartToolbar);
customElements.define('period-tabs', PeriodTabs);
customElements.define('price-chart', PriceChart);
customElements.define('macd-chart', MacdChart);
customElements.define('draw-tools', DrawTools);
customElements.define('account-bar', AccountBar);
</script>
</body>
</html>
